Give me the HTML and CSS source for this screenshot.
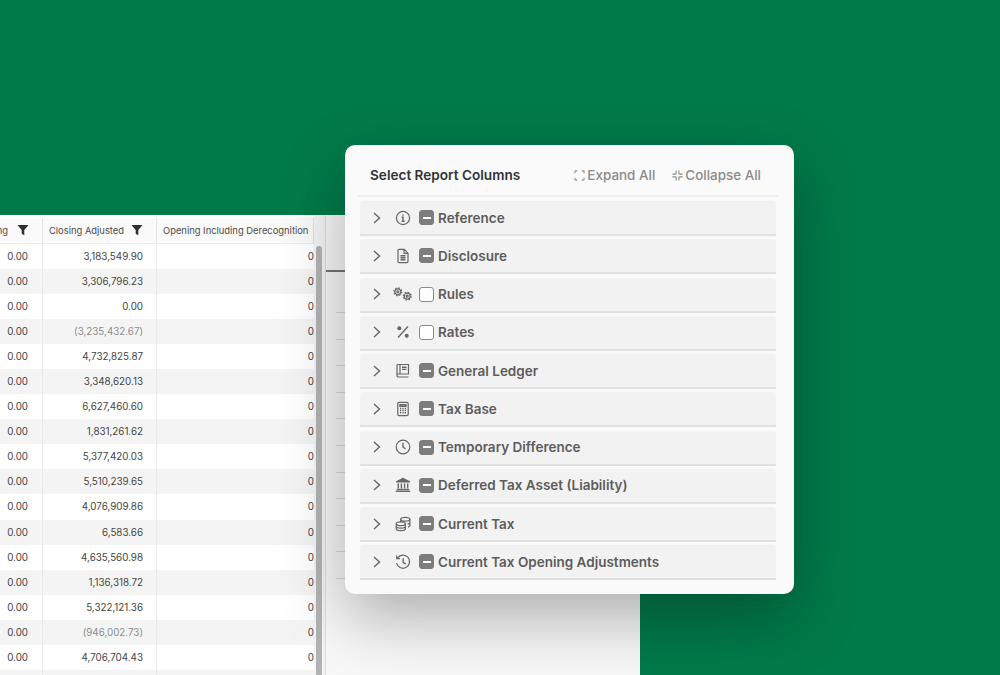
FILE: index.html
```html
<!DOCTYPE html>
<html lang="en">
<head>
<meta charset="utf-8">
<title>Select Report Columns</title>
<link rel="stylesheet" href="styles.css">
</head>
<body>
<main class="stage">
  <section class="window">
    <div class="table">
      <div class="cell head c0"><span class="head-label">Opening</span><svg class="filter" viewBox="0 0 12 12"><path d="M.5 1h11L7.300 6v5.200L4.700 9.800V6z"/></svg></div>
      <div class="cell head c1"><span class="head-label">Closing Adjusted</span><svg class="filter" viewBox="0 0 12 12"><path d="M.5 1h11L7.300 6v5.200L4.700 9.800V6z"/></svg></div>
      <div class="cell head c2"><span class="head-label">Opening Including Derecognition</span></div>

      <div class="cell c0">0.00</div><div class="cell c1">3,183,549.90</div><div class="cell c2">0</div>
      <div class="cell c0 alt">0.00</div><div class="cell c1 alt">3,306,796.23</div><div class="cell c2 alt">0</div>
      <div class="cell c0">0.00</div><div class="cell c1">0.00</div><div class="cell c2">0</div>
      <div class="cell c0 alt">0.00</div><div class="cell c1 alt neg">(3,235,432.67)</div><div class="cell c2 alt">0</div>
      <div class="cell c0">0.00</div><div class="cell c1">4,732,825.87</div><div class="cell c2">0</div>
      <div class="cell c0 alt">0.00</div><div class="cell c1 alt">3,348,620.13</div><div class="cell c2 alt">0</div>
      <div class="cell c0">0.00</div><div class="cell c1">6,627,460.60</div><div class="cell c2">0</div>
      <div class="cell c0 alt">0.00</div><div class="cell c1 alt">1,831,261.62</div><div class="cell c2 alt">0</div>
      <div class="cell c0">0.00</div><div class="cell c1">5,377,420.03</div><div class="cell c2">0</div>
      <div class="cell c0 alt">0.00</div><div class="cell c1 alt">5,510,239.65</div><div class="cell c2 alt">0</div>
      <div class="cell c0">0.00</div><div class="cell c1">4,076,909.86</div><div class="cell c2">0</div>
      <div class="cell c0 alt">0.00</div><div class="cell c1 alt">6,583.66</div><div class="cell c2 alt">0</div>
      <div class="cell c0">0.00</div><div class="cell c1">4,635,560.98</div><div class="cell c2">0</div>
      <div class="cell c0 alt">0.00</div><div class="cell c1 alt">1,136,318.72</div><div class="cell c2 alt">0</div>
      <div class="cell c0">0.00</div><div class="cell c1">5,322,121.36</div><div class="cell c2">0</div>
      <div class="cell c0 alt">0.00</div><div class="cell c1 alt neg">(946,002.73)</div><div class="cell c2 alt">0</div>
      <div class="cell c0">0.00</div><div class="cell c1">4,706,704.43</div><div class="cell c2">0</div>
      <div class="cell c0 alt"></div><div class="cell c1 alt"></div><div class="cell c2 alt"></div>
    </div>
    <div class="gutter"><div class="thumb"></div></div>
    <div class="side">
      <div class="side-head"></div>
      <div class="side-rows">
        <div class="tick"></div><div class="tick"></div><div class="tick"></div><div class="tick"></div>
        <div class="tick"></div><div class="tick"></div><div class="tick"></div><div class="tick"></div>
        <div class="tick"></div><div class="tick"></div><div class="tick"></div>
      </div>
    </div>
  </section>

  <section class="popup">
    <header class="popup-head">
      <h1 class="popup-title">Select Report Columns</h1>
      <div class="popup-actions">
        <span class="action">
          <svg class="action-icon" viewBox="0 0 12 12"><path d="M1 3.500V2a1 1 0 0 1 1-1h1.500M8.500 1H10a1 1 0 0 1 1 1v1.500M11 8.500V10a1 1 0 0 1-1 1H8.500M3.500 11H2a1 1 0 0 1-1-1V8.500"/></svg>Expand All
        </span>
        <span class="action">
          <svg class="action-icon" viewBox="0 0 12 12"><path d="M4.500 .5v3a1 1 0 0 1-1 1h-3M7.500 .5v3a1 1 0 0 0 1 1h3M11.500 7.500h-3a1 1 0 0 0-1 1v3M4.500 11.500v-3a1 1 0 0 0-1-1h-3"/></svg>Collapse All
        </span>
      </div>
    </header>
    <ul class="groups">
      <li class="group">
        <svg class="chev" viewBox="0 0 10 14"><path d="M2 2l5.500 5L2 12"/></svg>
        <span class="type-icon"><svg viewBox="0 0 16 16"><circle cx="8" cy="8" r="6.600"/><path class="heavy" d="M6.700 7.200H8v4M6.600 11.200h3M8 4.400v1.300"/></svg></span>
        <span class="box mixed"></span><span class="label">Reference</span>
      </li>
      <li class="group">
        <svg class="chev" viewBox="0 0 10 14"><path d="M2 2l5.500 5L2 12"/></svg>
        <span class="type-icon"><svg viewBox="0 0 16 16"><path d="M3 2.400a1 1 0 0 1 1-1h5.200L13 5.200v8.400a1 1 0 0 1-1 1H4a1 1 0 0 1-1-1zM9 1.500v3.900h4"/><path class="heavy" d="M5.500 7.800h5M5.500 9.800h5M5.500 11.800h5"/></svg></span>
        <span class="box mixed"></span><span class="label">Disclosure</span>
      </li>
      <li class="group">
        <svg class="chev" viewBox="0 0 10 14"><path d="M2 2l5.500 5L2 12"/></svg>
        <span class="type-icon"><svg viewBox="0 0 16 16"><circle cx="2.800" cy="5.800" r="3"/><circle cx="2.800" cy="5.800" r="3.900" stroke-dasharray="1.500 1.560" stroke-width="1.300"/><circle cx="2.800" cy="5.800" r="1"/><circle cx="12.200" cy="10.200" r="3"/><circle cx="12.200" cy="10.200" r="3.900" stroke-dasharray="1.500 1.560" stroke-width="1.300"/><circle cx="12.200" cy="10.200" r="1"/></svg></span>
        <span class="box"></span><span class="label">Rules</span>
      </li>
      <li class="group">
        <svg class="chev" viewBox="0 0 10 14"><path d="M2 2l5.500 5L2 12"/></svg>
        <span class="type-icon"><svg viewBox="0 0 16 16"><path class="heavy" d="M13 2.500 3 13.500"/><circle class="solid" cx="4.300" cy="4.300" r="2"/><circle class="solid" cx="11.700" cy="11.700" r="2"/></svg></span>
        <span class="box"></span><span class="label">Rates</span>
      </li>
      <li class="group">
        <svg class="chev" viewBox="0 0 10 14"><path d="M2 2l5.500 5L2 12"/></svg>
        <span class="type-icon"><svg viewBox="0 0 16 16"><path d="M2 12.500V2.500a1 1 0 0 1 1-1h10.500V11H3.500A1.500 1.500 0 0 0 2 12.500 1.500 1.500 0 0 0 3.500 14h10"/><path d="M5 1.500V11"/><path class="heavy" d="M7 4.200h4.500M7 6.400h4.500"/></svg></span>
        <span class="box mixed"></span><span class="label">General Ledger</span>
      </li>
      <li class="group">
        <svg class="chev" viewBox="0 0 10 14"><path d="M2 2l5.500 5L2 12"/></svg>
        <span class="type-icon"><svg viewBox="0 0 16 16"><rect x="2.800" y="1.300" width="10.400" height="13.400" rx="1.200"/><path class="heavy" d="M5 3.800h6v1.600H5zM5 7.500h1.300M7.400 7.500h1.300M9.700 7.500H11M5 9.500h1.300M7.400 9.500h1.300M9.700 9.500H11M5 11.700h1.300M7.400 11.700h1.300M9.700 11.700H11"/></svg></span>
        <span class="box mixed"></span><span class="label">Tax Base</span>
      </li>
      <li class="group">
        <svg class="chev" viewBox="0 0 10 14"><path d="M2 2l5.500 5L2 12"/></svg>
        <span class="type-icon"><svg viewBox="0 0 16 16"><circle cx="8" cy="8" r="6.800"/><path class="heavy" d="M8 3.800V8l2.600 2"/></svg></span>
        <span class="box mixed"></span><span class="label">Temporary Difference</span>
      </li>
      <li class="group">
        <svg class="chev" viewBox="0 0 10 14"><path d="M2 2l5.500 5L2 12"/></svg>
        <span class="type-icon"><svg viewBox="0 0 16 16"><path class="solid" d="M8 .8 15 4.300v1.300H1V4.300z"/><path class="heavy" d="M3.300 6.500v4.800M6.400 6.500v4.800M9.600 6.500v4.800M12.700 6.500v4.800M1.800 12.400h12.400M.8 14.300h14.400"/></svg></span>
        <span class="box mixed"></span><span class="label">Deferred Tax Asset (Liability)</span>
      </li>
      <li class="group">
        <svg class="chev" viewBox="0 0 10 14"><path d="M2 2l5.500 5L2 12"/></svg>
        <span class="type-icon"><svg viewBox="0 0 16 16"><ellipse cx="10.300" cy="3.300" rx="4.600" ry="1.900"/><path d="M5.700 3.300v3M14.900 3.300v6.200c0 .7-.8 1.300-2 1.600M14.900 6.400c0 .8-1 1.400-2.300 1.700"/><ellipse cx="5.800" cy="7.800" rx="4.600" ry="1.900"/><path d="M1.200 7.800v5c0 1 2 1.900 4.600 1.900s4.600-.9 4.600-1.900v-5M1.200 10.300c0 1 2 1.900 4.600 1.900s4.600-.9 4.600-1.900"/></svg></span>
        <span class="box mixed"></span><span class="label">Current Tax</span>
      </li>
      <li class="group">
        <svg class="chev" viewBox="0 0 10 14"><path d="M2 2l5.500 5L2 12"/></svg>
        <span class="type-icon"><svg viewBox="0 0 16 16"><path d="M2.600 3.800A6.600 6.600 0 1 1 1.500 9M1.700 1.400v3.300H5"/><path class="heavy" d="M8.200 4.300v4l2.600 2"/></svg></span>
        <span class="box mixed"></span><span class="label">Current Tax Opening Adjustments</span>
      </li>
    </ul>
  </section>
</main>
</body>
</html>
```

FILE: styles.css
```css
* { box-sizing: border-box; }

html, body {
  margin: 0;
  height: 100%;
  overflow: hidden;
}

body {
  font-family: Inter, "Liberation Sans", sans-serif;
  color: #444;
}

.stage {
  position: relative;
  width: 1000px;
  height: 675px;
  padding-top: 215px;
  background: #007a49;
  overflow: hidden;
}

/* Background window */
.window {
  display: flex;
  width: 640px;
  height: 460px;
  background: #f6f6f6;
  overflow: hidden;
}

.table {
  display: grid;
  grid-template-columns: 43px 114px 157px;
  grid-template-rows: 26px;
  grid-auto-rows: 25.06px;
  flex: none;
  width: 314px;
  padding-top: 3px;
  background: #fff;
  align-content: start;
}

.cell {
  display: flex;
  align-items: center;
  justify-content: flex-end;
  padding-right: 13px;
  font-size: 9.8px;
  color: #444;
  white-space: nowrap;
  overflow: hidden;
  background: #fff;
}

.cell.c0 { padding-right: 14px; border-right: 1px solid #e9e9e9; }
.cell.c1 { border-right: 1px solid #e9e9e9; }
.cell.c2 { padding-right: 0; }
.cell.alt { background: #f4f4f4; }
.cell.neg { color: #8c8c8c; }

.cell.head {
  padding-bottom: 1px;
  background: #fafafa;
  border-bottom: 1px solid #ececec;
  border-right: 1px solid #e2e2e2;
  color: #4a4a4a;
  font-size: 9.4px;
}

.cell.head.c0 { padding-right: 13px; gap: 9px; }
.cell.head.c1 { justify-content: space-between; padding: 0 13px 1px 6px; }
.cell.head.c2 { justify-content: flex-start; padding-left: 6px; }

.head-label { flex: none; }

.filter {
  flex: none;
  width: 12px;
  height: 12px;
  fill: #2e2e2e;
}

.gutter {
  flex: none;
  width: 12px;
  padding: 31px 3px 0 2px;
  background: #f5f5f5;
  border-right: 1px solid #dcdcdc;
}

.thumb {
  height: 100%;
  border-radius: 3px 3px 0 0;
  background: #b4b4b4;
}

.side {
  flex: 1;
  background: #f8f8f8;
}

.side-head {
  height: 57px;
  border-bottom: 2px solid #747474;
}

.side-rows {
  padding: 40px 0 0 10px;
}

.tick {
  height: 26.6px;
  border-top: 1px solid #d8d8d8;
}

/* Column picker */
.popup {
  position: absolute;
  left: 345px;
  top: 145px;
  width: 449px;
  height: 449px;
  padding: 0 18px 0 15px;
  border-radius: 10px;
  background: #fafafa;
  box-shadow: 0 24px 64px rgba(0, 0, 0, .3);
}

.popup-head {
  display: flex;
  align-items: center;
  justify-content: space-between;
  height: 52px;
  margin: 0 -3px;
  padding: 10px 18px 0 13px;
  border-bottom: 2px solid #f0f0f0;
}

.popup-title {
  margin: 0;
  font-size: 13.6px;
  font-weight: 600;
  color: #333;
}

.popup-actions {
  display: flex;
  gap: 17px;
}

.action {
  display: flex;
  align-items: center;
  gap: 2px;
  font-size: 13.45px;
  font-weight: 500;
  color: #8a8a8a;
}

.action-icon {
  width: 11px;
  height: 11px;
  fill: none;
  stroke: #8a8a8a;
  stroke-width: 1.2;
}

.groups {
  display: flex;
  flex-direction: column;
  gap: 3.25px;
  margin: 4px 0 0;
  padding: 0;
  list-style: none;
}

.group {
  display: flex;
  align-items: center;
  height: 35px;
  padding-left: 12px;
  border-radius: 4px 4px 0 0;
  border-bottom: 2px solid #e0e0e0;
  background: #f2f2f2;
}

.chev {
  flex: none;
  width: 10px;
  height: 14px;
  fill: none;
  stroke: #666;
  stroke-width: 1.4;
}

.type-icon {
  display: flex;
  justify-content: center;
  flex: none;
  width: 18px;
  margin: 0 7px 0 12px;
}

.type-icon svg {
  display: block;
  width: 16px;
  height: 16px;
  fill: none;
  stroke: #666;
  stroke-width: 1.2;
  overflow: visible;
}

.type-icon .heavy { stroke-width: 1.4; }
.type-icon .solid { fill: #666; stroke: none; }

.box {
  position: relative;
  flex: none;
  width: 15px;
  height: 15px;
  border: 1px solid #8a8a8a;
  border-radius: 3px;
  background: #fff;
}

.box.mixed {
  border-color: #7d7d7d;
  background: #7d7d7d;
}

.box.mixed::after {
  content: "";
  position: absolute;
  left: 2.5px;
  right: 2.5px;
  top: 5.5px;
  height: 2px;
  background: #fff;
}

.label {
  margin-left: 4px;
  font-size: 13.5px;
  font-weight: 600;
  color: #5c5c5c;
}
```
